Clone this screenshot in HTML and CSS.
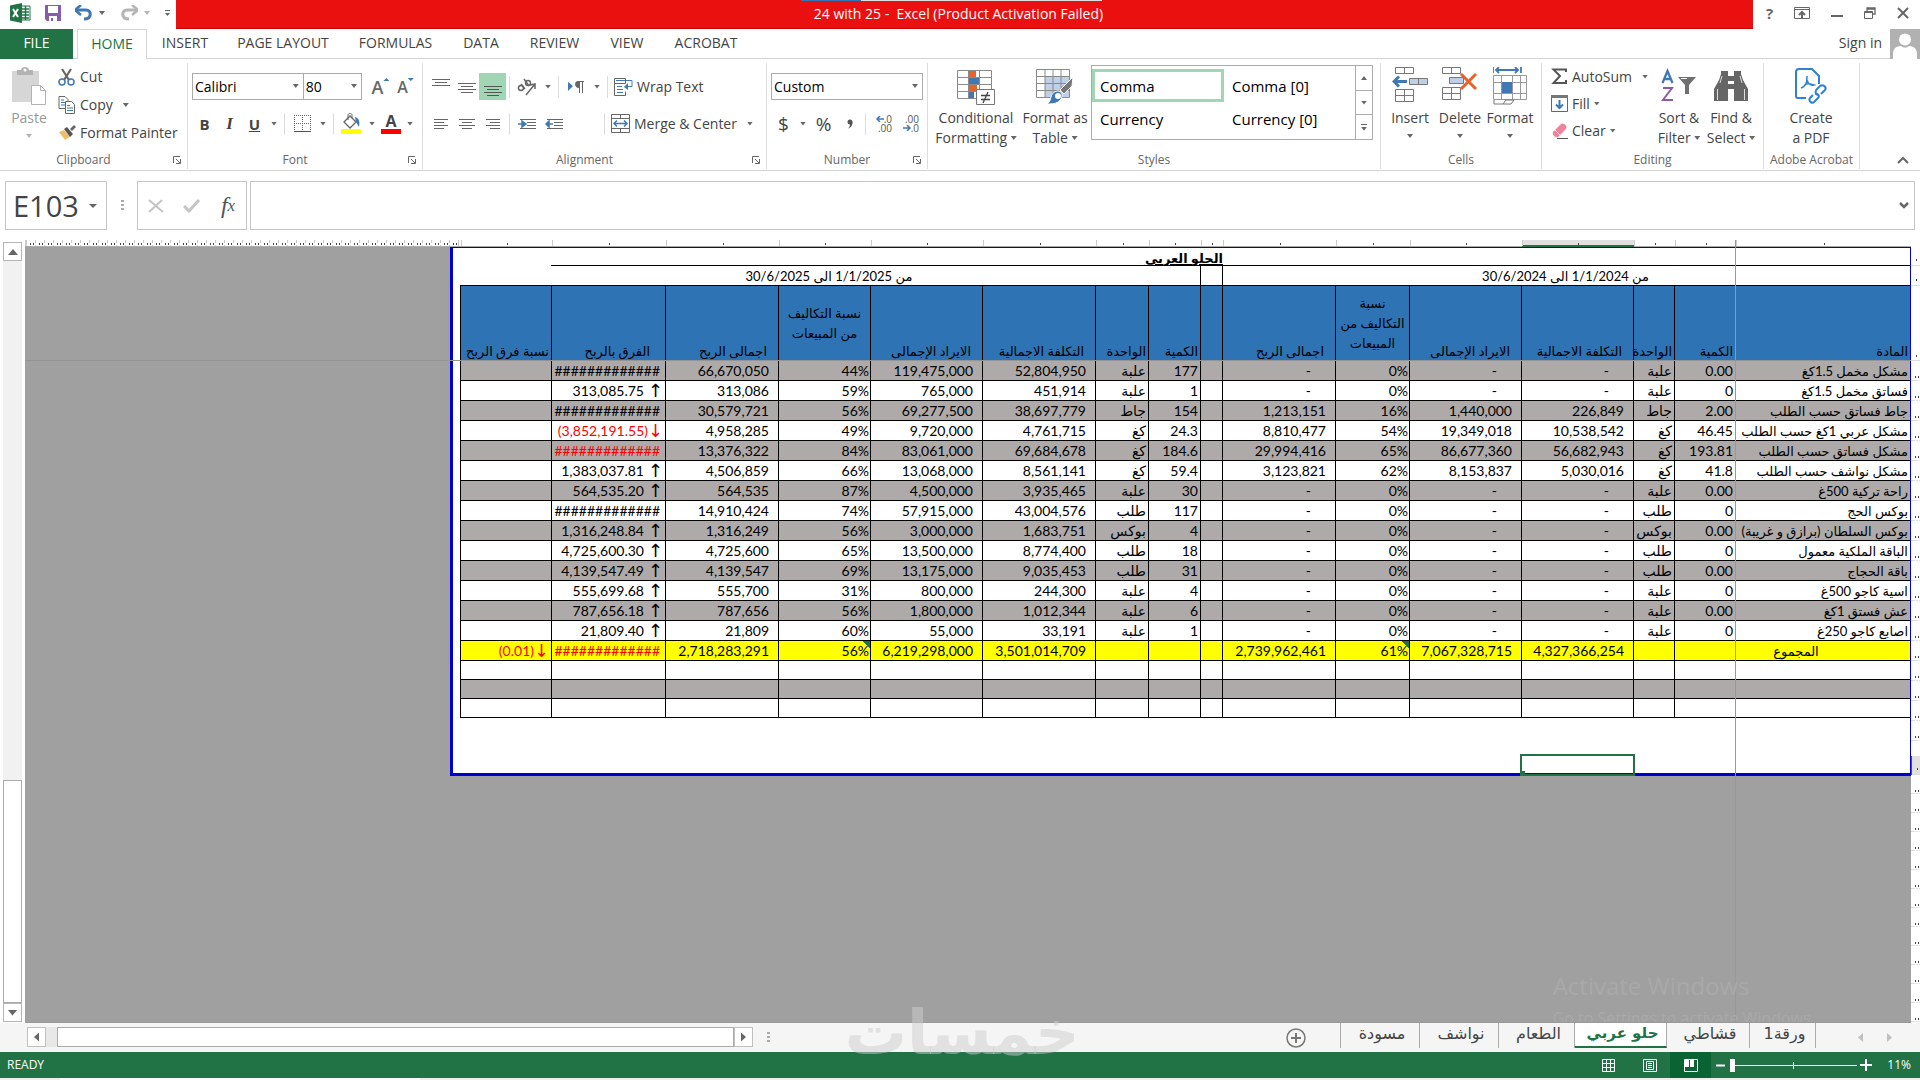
FILE: index.html
```html
<!DOCTYPE html>
<html lang="en">
<head>
<meta charset="utf-8">
<title>24 with 25 - Excel</title>
<link rel="stylesheet" href="styles.css">
</head>
<body>
<header class="titlebar">
  <div class="quick">
    <svg class="q-logo" width="21" height="20" viewBox="0 0 21 20"><path d="M11 3h9v14h-9" fill="#fff" stroke="#217346"/><path d="M12 6h7M12 9h7M12 12h7M12 15h7M15.500 3v14" stroke="#217346" stroke-width="1.500"/><path d="M0 2.500 12 0v20L0 17.500z" fill="#217346"/><path d="m3 6 5 8M8 6l-5 8" stroke="#fff" stroke-width="2"/></svg>
    <button aria-label="Save"><svg width="16" height="16" viewBox="0 0 16 16"><path d="M0 0h16v16H2l-2-2z" fill="#8a5aab"/><path d="M3 1h10v7H3zM4 11h8v5H4z" fill="#fff"/><path d="M6 13h2v3H6z" fill="#8a5aab"/></svg></button>
    <button aria-label="Undo"><svg width="18" height="16" viewBox="0 0 18 16"><path d="M2 5h9c6 0 6 9-2 9" fill="none" stroke="#3f78b4" stroke-width="3"/><path d="M6 0 0 5l6 5" fill="none" stroke="#3f78b4" stroke-width="2.500"/></svg></button>
    <i class="caret"></i>
    <button class="redo" aria-label="Redo"><svg width="18" height="16" viewBox="0 0 18 16"><path d="M16 5H7c-6 0-6 9 2 9" fill="none" stroke="#b5b5b5" stroke-width="3"/><path d="m12 0 6 5-6 5" fill="none" stroke="#b5b5b5" stroke-width="2.500"/></svg></button>
    <i class="caret pale"></i>
    <button class="more" aria-label="Customize toolbar"><svg width="5" height="7" viewBox="0 0 5 7"><path d="M0 .5h5" stroke="#666"/><path d="M0 3h5L2.500 6z" fill="#666"/></svg></button>
  </div>
  <h1 class="title">24 with 25 -&nbsp; Excel (Product Activation Failed)</h1>
  <div class="window">
    <button aria-label="Help" class="help">?</button>
    <button aria-label="Ribbon options"><svg width="16" height="12" viewBox="0 0 16 12"><path d="M.5.5h15v11H.5zM1 2.500h14" fill="none" stroke="#666"/><path d="M8 11V5M5 8l3-3 3 3" fill="none" stroke="#666" stroke-width="2"/></svg></button>
    <button aria-label="Minimize"><svg width="12" height="12" viewBox="0 0 12 12"><path d="M0 9h12" stroke="#666" stroke-width="2"/></svg></button>
    <button aria-label="Restore"><svg width="12" height="12" viewBox="0 0 12 12"><path d="M3 4V1h8v6H8M3 2h8" fill="none" stroke="#666" stroke-width="1.300"/><path d="M.5 4.500h8v7h-8zM1 5.500h7" fill="none" stroke="#666"/></svg></button>
    <button aria-label="Close"><svg width="12" height="12" viewBox="0 0 12 12"><path d="m1 1 10 10M11 1 1 11" stroke="#666" stroke-width="2"/></svg></button>
  </div>
</header>

<nav class="tabs">
  <button class="file">FILE</button>
  <button class="tab home">HOME</button>
  <button class="tab w76">INSERT</button>
  <button class="tab w120">PAGE LAYOUT</button>
  <button class="tab w105">FORMULAS</button>
  <button class="tab w66">DATA</button>
  <button class="tab w81">REVIEW</button>
  <button class="tab w64">VIEW</button>
  <button class="tab w94">ACROBAT</button>
  <a class="signin" href="#">Sign in</a>
  <svg class="avatar" width="30" height="30" viewBox="0 0 30 30"><path d="M0 0h30v30H0z" fill="#b1b1b1"/><circle cx="15" cy="10.500" r="6" fill="#fff"/><path d="M3 30v-5c0-6 4-8 8-8 3 2 5 2 8 0 4 0 8 2 8 8v5z" fill="#fff"/></svg>
</nav>

<section class="ribbon">
  <div class="group g-clip">
    <div class="body">
      <button class="big paste"><svg width="36" height="38" viewBox="0 0 36 38"><path d="M1 4h27v31H1z" fill="#d6d6d6"/><path d="M6 8V3h4c0-4 8-4 8 0h4v5z" fill="#b3b3b3"/><circle cx="14" cy="3" r="1.500" fill="#fff"/><path d="M20.500 18.500h9l5 5v14h-14z" fill="#fff" stroke="#b3b3b3"/><path d="M29.500 18.500v5h5" fill="none" stroke="#b3b3b3"/></svg><span>Paste</span><i class="caret pale"></i></button>
      <div class="list">
        <button><svg width="18" height="18" viewBox="0 0 18 18"><path d="m4 1 7 11M13 1 6 12" stroke="#666" stroke-width="2.200"/><circle cx="4" cy="14" r="3" fill="none" stroke="#3f78b4" stroke-width="1.500"/><circle cx="13" cy="14" r="3" fill="none" stroke="#3f78b4" stroke-width="1.500"/></svg>Cut</button>
        <button><svg width="18" height="18" viewBox="0 0 18 18"><path d="M1 .5h6l3 3v9H1z" fill="#fff" stroke="#666"/><path d="M3 4h3M3 6.500h5M3 9h5" stroke="#3f78b4"/><path d="M7.500 5.500h6l3 3v9h-9z" fill="#fff" stroke="#666"/><path d="M9 9.500h3M9 12h6M9 14.500h6" stroke="#3f78b4"/></svg>Copy<i class="caret gap-l"></i></button>
        <button><svg width="18" height="18" viewBox="0 0 18 18"><path d="m6 6 6 7-5 3-6-8z" fill="#f2bd6b"/><path d="m6 5 3-2 6 7-3 3z" fill="#555"/><path d="m12 5 4-4 2 2-4 4z" fill="#666"/></svg>Format Painter</button>
      </div>
    </div>
    <div class="label">Clipboard<svg class="launch" width="8" height="8" viewBox="0 0 8 8"><path d="M.5 7V.5H7M3 3l4 4M7.500 3v4.500H3" fill="none" stroke="#666"/></svg></div>
  </div>

  <div class="group g-font">
    <div class="body rows">
      <div class="row">
        <label class="drop w115"><select aria-label="Font"><option>Calibri</option></select><i class="caret"></i></label><label class="drop w60"><select aria-label="Font size"><option>80</option></select><i class="caret"></i></label>
        <button class="icon w25 glyph">A<sup class="up"></sup></button><button class="icon w25 glyph small">A<sup class="down"></sup></button>
      </div>
      <div class="row">
        <button class="icon w25 bold">B</button><button class="icon w25 bold ital">I</button><button class="icon w25 bold under">U</button><button class="icon w14" aria-label="Underline style"><i class="caret"></i></button><i class="bar"></i>
        <button class="icon w28" aria-label="Borders"><svg width="17" height="17" viewBox="0 0 17 17"><path d="M0 .5h17M.5 0v17M8.500 0v17M16.500 0v17M0 8.500h17" stroke="#666" stroke-dasharray="1 1" fill="none"/><path d="M0 16.500h17" stroke="#555"/></svg></button><button class="icon w14" aria-label="Border style"><i class="caret"></i></button><i class="bar"></i>
        <button class="icon w28" aria-label="Fill color"><svg width="20" height="21" viewBox="0 0 20 21"><path d="m3 9 6-6 6 6-6 6z" fill="#fff" stroke="#666" stroke-width="1.300"/><path d="M7 7V2c0-2 4-2 4 0v3" fill="none" stroke="#666"/><path d="M14 4c4 1 5 4 4 10l-3-5z" fill="#3f78b4"/><path d="M0 16h20v5H0z" fill="#ff0"/></svg></button><button class="icon w14" aria-label="Fill colors"><i class="caret"></i></button>
        <button class="icon w25 fontcolor">A</button><button class="icon w14" aria-label="Font colors"><i class="caret"></i></button>
      </div>
    </div>
    <div class="label">Font<svg class="launch" width="8" height="8" viewBox="0 0 8 8"><path d="M.5 7V.5H7M3 3l4 4M7.500 3v4.500H3" fill="none" stroke="#666"/></svg></div>
  </div>

  <div class="group g-align">
    <div class="body rows">
      <div class="row">
        <button class="icon w27" aria-label="Top align"><svg width="18" height="18" viewBox="0 0 18 18"><path d="M0 1.500h18M3 4.500h12M0 7.500h18" stroke="#666"/></svg></button><button class="icon w25" aria-label="Middle align"><svg width="18" height="18" viewBox="0 0 18 18"><path d="M0 5.500h18M3 8.500h12M0 11.500h18M3 14.500h12" stroke="#666"/></svg></button><button class="icon w27 on" aria-label="Bottom align"><svg width="18" height="18" viewBox="0 0 18 18"><path d="M0 8.500h18M3 11.500h12M0 14.500h18M3 17.500h12" stroke="#555"/></svg></button><i class="bar"></i>
        <button class="icon w28" aria-label="Orientation"><svg width="20" height="18" viewBox="0 0 20 18"><circle cx="4" cy="10" r="2.500" fill="none" stroke="#666" stroke-width="1.500"/><path d="m4 6 4 5M7 1l5 7" stroke="#666" stroke-width="1.500"/><circle cx="11" cy="5" r="2.500" fill="none" stroke="#666" stroke-width="1.500"/><path d="M9 17 18 6M13 7l5-1v5" fill="none" stroke="#666" stroke-width="1.500"/></svg></button><button class="icon w14" aria-label="Orientations"><i class="caret"></i></button><i class="bar"></i>
        <button class="icon w28" aria-label="Text direction"><svg width="16" height="12" viewBox="0 0 16 12"><path d="m0 1 5 4-5 5z" fill="#3f78b4"/><path d="M10 0h6v1h-1v11h-1V1h-2v11h-1V7C6 7 6 0 10 0z" fill="#666"/></svg></button><button class="icon w14" aria-label="Directions"><i class="caret"></i></button><i class="bar"></i>
        <button class="wide"><svg width="19" height="18" viewBox="0 0 19 18"><path d="M.5.500h11v5H.5zM.5 5.500v12h11v-4" fill="none" stroke="#666"/><path d="M2 2.500h16v6h-6M3 8.500h5M3 11.500h6M3 14.500h6" fill="none" stroke="#3f78b4"/><path d="m14 5-4 4 4 3z" fill="#3f78b4"/></svg>Wrap Text</button>
      </div>
      <div class="row">
        <button class="icon w27" aria-label="Align left"><svg width="14" height="12" viewBox="0 0 14 12"><path d="M0 1.500h14M0 4.500h10M0 7.500h14M0 10.500h10" stroke="#666"/></svg></button><button class="icon w25" aria-label="Center"><svg width="16" height="12" viewBox="0 0 16 12"><path d="M0 1.500h16M3 4.500h10M0 7.500h16M3 10.500h10" stroke="#666"/></svg></button><button class="icon w27" aria-label="Align right"><svg width="14" height="12" viewBox="0 0 14 12"><path d="M0 1.500h14M4 4.500h10M0 7.500h14M4 10.500h10" stroke="#666"/></svg></button><i class="bar"></i>
        <button class="icon w27" aria-label="Decrease indent"><svg width="18" height="12" viewBox="0 0 18 12"><path d="M2 1.500h16M9 4.500h9M9 7.500h9M2 10.500h16" stroke="#666"/><path d="M0 6h5M4 3l4 3-4 3z" stroke="#3f78b4" stroke-width="1.500" fill="#3f78b4"/></svg></button><button class="icon w27" aria-label="Increase indent"><svg width="18" height="12" viewBox="0 0 18 12"><path d="M2 1.500h16M9 4.500h9M9 7.500h9M2 10.500h16" stroke="#666"/><path d="M3 6h5M4 3 1 6l3 3z" stroke="#3f78b4" stroke-width="1.500" fill="#3f78b4"/></svg></button><i class="bar far"></i>
        <button class="wide"><svg width="19" height="19" viewBox="0 0 19 19"><path d="M.5.5h18v18H.5zM0 4.500h19M0 14.500h19M9.500 0v4M9.500 15v4" fill="none" stroke="#666"/><path d="M3 9.500h13M6 6.500l-3 3 3 3M13 6.500l3 3-3 3" fill="none" stroke="#3f78b4" stroke-width="1.500"/></svg>Merge &amp; Center<i class="caret gap-l"></i></button>
      </div>
    </div>
    <div class="label">Alignment<svg class="launch" width="8" height="8" viewBox="0 0 8 8"><path d="M.5 7V.5H7M3 3l4 4M7.500 3v4.500H3" fill="none" stroke="#666"/></svg></div>
  </div>

  <div class="group g-num">
    <div class="body rows">
      <div class="row"><label class="drop full"><select aria-label="Number format"><option>Custom</option></select><i class="caret"></i></label></div>
      <div class="row">
        <button class="icon w25 sign">$</button><button class="icon w14" aria-label="Currencies"><i class="caret"></i></button><button class="icon w27 sign">%</button><button class="icon w25" aria-label="Comma style"><svg width="6" height="10" viewBox="0 0 6 10"><circle cx="3" cy="3" r="2.500" fill="#555"/><path d="M5.500 3c0 4-2 6-4.500 6.500 2-2 2-3 2-5z" fill="#555"/></svg></button><i class="bar"></i>
        <button class="icon w27 dec"><span><svg width="8" height="6" viewBox="0 0 8 6"><path d="M1 3h7M4 0 1 3l3 3" fill="none" stroke="#3f78b4" stroke-width="1.500"/></svg>.0</span><span>.00</span></button><button class="icon w27 dec"><span>.00</span><span><svg width="8" height="6" viewBox="0 0 8 6"><path d="M0 3h7M4 0l3 3-3 3" fill="none" stroke="#3f78b4" stroke-width="1.500"/></svg>.0</span></button>
      </div>
    </div>
    <div class="label">Number<svg class="launch" width="8" height="8" viewBox="0 0 8 8"><path d="M.5 7V.5H7M3 3l4 4M7.500 3v4.500H3" fill="none" stroke="#666"/></svg></div>
  </div>

  <div class="group g-styles">
    <div class="body">
      <button class="big w86"><svg width="38" height="38" viewBox="0 0 38 38"><path d="M11 4h8v7h-8z" fill="#e8622c"/><path d="M11 11h12v7H11z" fill="#3f78b4"/><path d="M11 18h9v7h-9z" fill="#e8622c"/><path d="M11 25h6v6h-6z" fill="#3f78b4"/><path d="M.5 3.500h34v28H.5zM.5 10.500h34M.5 17.500h34M.5 24.500h34M11.500 3v28M22.500 3v28" fill="none" stroke="#8a8a8a"/><path d="M19.500 22.500h18v15h-18z" fill="#fff" stroke="#777"/><path d="M24 28.500h9M24 32.500h9M31 25l-5 11" stroke="#444" stroke-width="1.300"/></svg><span>Conditional</span><span>Formatting <i class="caret"></i></span></button>
      <button class="big w72"><svg width="38" height="38" viewBox="0 0 38 38"><path d="M9 10h24v21H9z" fill="#bdd0e8"/><path d="M.5 2.500h33v28H.5zM.5 9.500h33M.5 16.500h33M.5 23.500h33M9 2.500v28M17 2.500v28M25 2.500v28" fill="none" stroke="#8a8a8a"/><path d="m37 10-1 9-8 8-4-4z" fill="#777" stroke="#fff"/><path d="M22 24c5 0 6 7 0 11-3 2-8 2-11 2 3-2 3-4 4-7 1-4 4-6 7-6z" fill="#3f78b4" stroke="#fff"/><circle cx="22" cy="29" r="3" fill="#fff"/></svg><span>Format as</span><span>Table <i class="caret"></i></span></button>
      <div class="gallery">
        <button class="sel">Comma</button><button>Comma [0]</button><button>Currency</button><button>Currency [0]</button>
        <div class="spin"><button aria-label="Up"><i class="caret flip"></i></button><button aria-label="Down"><i class="caret"></i></button><button aria-label="More"><i class="dash"></i><i class="caret"></i></button></div>
      </div>
    </div>
    <div class="label">Styles</div>
  </div>

  <div class="group g-cells">
    <div class="body">
      <button class="big w50"><svg width="36" height="38" viewBox="0 0 36 38"><path d="M3.500.5h18v6h-18zM12.500.5v6M3.500 22.500h18v12h-18zM3.500 28.500h18M12.500 22.500v12" fill="none" stroke="#777"/><path d="M17.500 11.500h18v6h-18z" fill="#bdd0e8" stroke="#777"/><path d="M26.500 12v5" stroke="#777"/><path d="M2 14.500h13M7 9.500l-5 5 5 5" fill="none" stroke="#3f78b4" stroke-width="3"/></svg><span>Insert</span><i class="caret"></i></button>
      <button class="big w50"><svg width="36" height="38" viewBox="0 0 36 38"><path d="M.5.5h18v6H.5zM9.500.500v6M.5 20.500h18v12H.5zM.5 26.500h18M9.500 20.500v12" fill="none" stroke="#777"/><path d="M7.500 10.500h14v6h-14z" fill="#bdd0e8" stroke="#777"/><path d="m19 7 15 15M34 7 19 22" stroke="#e8622c" stroke-width="3"/></svg><span>Delete</span><i class="caret"></i></button>
      <button class="big w50"><svg width="34" height="38" viewBox="0 0 34 38"><path d="M0 0v6M28 0v6M3 3h22M6 0 3 3l3 3M22 0l3 3-3 3" fill="none" stroke="#3f78b4" stroke-width="1.800"/><path d="M.5 8.500h33v24H.5zM.5 15.500h33M.5 26.500h33M8.500 8v24M19.500 8v24M27.500 8v24" fill="none" stroke="#999"/><path d="M9 15h10v11H9z" fill="#3f78b4"/><path d="M1 33v4h9l3-4h8l-3 4h-8" fill="none" stroke="#777"/></svg><span>Format</span><i class="caret"></i></button>
    </div>
    <div class="label">Cells</div>
  </div>

  <div class="group g-edit">
    <div class="body">
      <div class="list">
        <button><svg width="17" height="17" viewBox="0 0 17 17"><path d="M15 4V1.500H2.500L9 8l-6.500 7H15V12" fill="none" stroke="#555" stroke-width="2"/></svg>AutoSum<i class="caret gap-l"></i></button>
        <button><svg width="17" height="17" viewBox="0 0 17 17"><path d="M.5.5h16v16H.5z" fill="#fff" stroke="#666"/><path d="M0 0h17v3H0z" fill="#777"/><path d="M8.500 5v8M5 9.500l3.500 3.500L12 9.500" fill="none" stroke="#3f78b4" stroke-width="2"/></svg>Fill<i class="caret"></i></button>
        <button><svg width="17" height="17" viewBox="0 0 17 17"><path d="m2 10 8-8c2-2 7 2 5 5l-8 8c-3 1-6-2-5-5z" fill="#f0839b"/><path d="m4 8 5 5" stroke="#fff"/><path d="M6 16.500h11" stroke="#555"/></svg>Clear<i class="caret"></i></button>
      </div>
      <button class="big w52"><svg width="36" height="34" viewBox="0 0 36 34"><path d="M1.500 14 6.500 2l5 12M3 10h7" fill="none" stroke="#3f78b4" stroke-width="2.300"/><path d="M2 19h9L2 31h10" fill="none" stroke="#8a5aab" stroke-width="2"/><path d="M17 8h18l-7 8v9h-4v-9z" fill="#707070"/><path d="M20 9.500h6" stroke="#fff"/></svg><span>Sort &amp;</span><span>Filter <i class="caret"></i></span></button>
      <button class="big w52"><svg width="34" height="34" viewBox="0 0 34 34"><path d="M7 2h7v5h6V2h7v3l2 6 5 9v12H20V20h-6v12H0V20l5-9 2-6z" fill="#666"/><path d="M14 12h6v3h-6z" fill="#fff"/><path d="M3.500 20v11M30.500 20v11M8 7l-2 7M26 7l2 7" stroke="#ddd" fill="none"/></svg><span>Find &amp;</span><span>Select <i class="caret"></i></span></button>
    </div>
    <div class="label">Editing</div>
  </div>

  <div class="group g-pdf">
    <div class="body">
      <button class="big"><svg width="32" height="36" viewBox="0 0 32 36"><path d="M11 30H3c-1 0-2-1-2-2V4c0-2 1-3 3-3h13l7 7v8" fill="none" stroke="#2f82d0" stroke-width="2"/><path d="M6 20c5-2 6-5 6-12M6 20c3 0 3-3 5-4 3-1 5 0 8 1-4 1-6-2-7-5" fill="none" stroke="#2f82d0" stroke-width="1.500"/><path d="m18 27-3 3c-2 3 2 6 4 4l4-4c2-2 0-5-3-4M23 27c-3-1-3-4-1-6l3-3c3-2 7 1 5 4l-4 4" fill="none" stroke="#2f82d0" stroke-width="2"/></svg><span>Create</span><span>a PDF</span></button>
    </div>
    <div class="label">Adobe Acrobat</div>
  </div>
  <button class="collapse" aria-label="Collapse ribbon"><svg width="12" height="8" viewBox="0 0 12 8"><path d="m1 7 5-5 5 5" fill="none" stroke="#666" stroke-width="2"/></svg></button>
</section>

<section class="formula">
  <label class="name"><input aria-label="Name box" value="E103"><i class="caret"></i></label>
  <i class="dots"></i>
  <div class="fx">
    <button aria-label="Cancel"><svg width="16" height="14" viewBox="0 0 16 14"><path d="m1 1 14 12M14 1 1 13" stroke="#c4c4c4" stroke-width="2"/></svg></button>
    <button aria-label="Enter"><svg width="18" height="14" viewBox="0 0 18 14"><path d="m1 7 5 5L16 1" fill="none" stroke="#c4c4c4" stroke-width="3"/></svg></button>
    <button class="fn" aria-label="Insert function">f<sub>x</sub></button>
  </div>
  <label class="entry"><input aria-label="Formula bar"><svg width="10" height="7" viewBox="0 0 10 7"><path d="m1 1 4 4 4-4" fill="none" stroke="#666" stroke-width="2.500"/></svg></label>
</section>

<main class="work">
  <div class="vscroll"><button aria-label="Scroll up"><i class="caret large flip"></i></button><div class="track"></div><div class="thumb"></div><button aria-label="Scroll down"><i class="caret large"></i></button></div>
  <div class="canvas">
    <div class="cols" dir="rtl"><i class="c-item"></i><i class="c-qty"></i><i class="c-unit"></i><i class="c-num picked"></i><i class="c-num"></i><i class="c-pct"></i><i class="c-profit"></i><i class="c-gap"></i><i class="c-qty2"></i><i class="c-unit2"></i><i class="c-profit"></i><i class="c-num"></i><i class="c-pct2"></i><i class="c-profit"></i><i class="c-diff"></i><i class="c-last"></i><i class="c-rest"></i></div>
    <div class="page">
      <table dir="rtl" lang="ar">
        <colgroup><col class="c-item"><col class="c-qty"><col class="c-unit"><col class="c-num"><col class="c-num"><col class="c-pct"><col class="c-profit"><col class="c-gap"><col class="c-qty2"><col class="c-unit2"><col class="c-profit"><col class="c-num"><col class="c-pct2"><col class="c-profit"><col class="c-diff"><col class="c-last"></colgroup>
        <thead>
          <tr class="caption"><th colspan="16">الحلو العربي</th></tr>
          <tr class="period"><th colspan="7">من 1/1/2024 الى 30/6/2024</th><th></th><th colspan="8">من 1/1/2025 الى 30/6/2025</th></tr>
          <tr class="heads"><th>المادة</th><th>الكمية</th><th>الواحدة</th><th>التكلفة الاجمالية</th><th>الايراد الإجمالى</th><th class="mid">نسبة<br>التكاليف من<br>المبيعات</th><th>اجمالى الربح</th><th></th><th>الكمية</th><th>الواحدة</th><th>التكلفة الاجمالية</th><th>الايراد الإجمالى</th><th class="mid">نسبة التكاليف<br>من المبيعات</th><th>اجمالى الربح</th><th>الفرق بالربح</th><th>نسبة فرق الربح</th></tr>
        </thead>
        <tbody>
          <tr><td>مشكل مخمل 1.5كغ</td><td>0.00</td><td>علبة</td><td class="nil">-</td><td class="nil">-</td><td>0%</td><td class="nil">-</td><td></td><td>177</td><td>علبة</td><td>52,804,950</td><td>119,475,000</td><td>44%</td><td>66,670,050</td><td class="hash">#############</td><td></td></tr>
          <tr><td>فساتق مخمل 1.5كغ</td><td>0</td><td>علبة</td><td class="nil">-</td><td class="nil">-</td><td>0%</td><td class="nil">-</td><td></td><td>1</td><td>علبة</td><td>451,914</td><td>765,000</td><td>59%</td><td>313,086</td><td><bdi>313,085.75<b>↑</b></bdi></td><td></td></tr>
          <tr><td>جاط فساتق حسب الطلب</td><td>2.00</td><td>جاط</td><td>226,849</td><td>1,440,000</td><td>16%</td><td>1,213,151</td><td></td><td>154</td><td>جاط</td><td>38,697,779</td><td>69,277,500</td><td>56%</td><td>30,579,721</td><td class="hash">#############</td><td></td></tr>
          <tr><td>مشكل عربي 1كغ حسب الطلب</td><td>46.45</td><td>كغ</td><td>10,538,542</td><td>19,349,018</td><td>54%</td><td>8,810,477</td><td></td><td>24.3</td><td>كغ</td><td>4,761,715</td><td>9,720,000</td><td>49%</td><td>4,958,285</td><td class="neg"><bdi>(3,852,191.55)<b>↓</b></bdi></td><td></td></tr>
          <tr><td>مشكل فساتق حسب الطلب</td><td>193.81</td><td>كغ</td><td>56,682,943</td><td>86,677,360</td><td>65%</td><td>29,994,416</td><td></td><td>184.6</td><td>كغ</td><td>69,684,678</td><td>83,061,000</td><td>84%</td><td>13,376,322</td><td class="hash neg">#############</td><td></td></tr>
          <tr><td>مشكل نواشف حسب الطلب</td><td>41.8</td><td>كغ</td><td>5,030,016</td><td>8,153,837</td><td>62%</td><td>3,123,821</td><td></td><td>59.4</td><td>كغ</td><td>8,561,141</td><td>13,068,000</td><td>66%</td><td>4,506,859</td><td><bdi>1,383,037.81<b>↑</b></bdi></td><td></td></tr>
          <tr><td>راحة تركية 500غ</td><td>0.00</td><td>علبة</td><td class="nil">-</td><td class="nil">-</td><td>0%</td><td class="nil">-</td><td></td><td>30</td><td>علبة</td><td>3,935,465</td><td>4,500,000</td><td>87%</td><td>564,535</td><td><bdi>564,535.20<b>↑</b></bdi></td><td></td></tr>
          <tr><td>بوكس الحج</td><td>0</td><td>طلب</td><td class="nil">-</td><td class="nil">-</td><td>0%</td><td class="nil">-</td><td></td><td>117</td><td>طلب</td><td>43,004,576</td><td>57,915,000</td><td>74%</td><td>14,910,424</td><td class="hash">#############</td><td></td></tr>
          <tr><td>بوكس السلطان (برازق و غريبة)</td><td>0.00</td><td>بوكس</td><td class="nil">-</td><td class="nil">-</td><td>0%</td><td class="nil">-</td><td></td><td>4</td><td>بوكس</td><td>1,683,751</td><td>3,000,000</td><td>56%</td><td>1,316,249</td><td><bdi>1,316,248.84<b>↑</b></bdi></td><td></td></tr>
          <tr><td>الباقة الملكية معمول</td><td>0</td><td>طلب</td><td class="nil">-</td><td class="nil">-</td><td>0%</td><td class="nil">-</td><td></td><td>18</td><td>طلب</td><td>8,774,400</td><td>13,500,000</td><td>65%</td><td>4,725,600</td><td><bdi>4,725,600.30<b>↑</b></bdi></td><td></td></tr>
          <tr><td>باقة الحجاج</td><td>0.00</td><td>طلب</td><td class="nil">-</td><td class="nil">-</td><td>0%</td><td class="nil">-</td><td></td><td>31</td><td>طلب</td><td>9,035,453</td><td>13,175,000</td><td>69%</td><td>4,139,547</td><td><bdi>4,139,547.49<b>↑</b></bdi></td><td></td></tr>
          <tr><td>اسية كاجو 500غ</td><td>0</td><td>علبة</td><td class="nil">-</td><td class="nil">-</td><td>0%</td><td class="nil">-</td><td></td><td>4</td><td>علبة</td><td>244,300</td><td>800,000</td><td>31%</td><td>555,700</td><td><bdi>555,699.68<b>↑</b></bdi></td><td></td></tr>
          <tr><td>عش فستق 1كغ</td><td>0.00</td><td>علبة</td><td class="nil">-</td><td class="nil">-</td><td>0%</td><td class="nil">-</td><td></td><td>6</td><td>علبة</td><td>1,012,344</td><td>1,800,000</td><td>56%</td><td>787,656</td><td><bdi>787,656.18<b>↑</b></bdi></td><td></td></tr>
          <tr><td>اصابع كاجو 250غ</td><td>0</td><td>علبة</td><td class="nil">-</td><td class="nil">-</td><td>0%</td><td class="nil">-</td><td></td><td>1</td><td>علبة</td><td>33,191</td><td>55,000</td><td>60%</td><td>21,809</td><td><bdi>21,809.40<b>↑</b></bdi></td><td></td></tr>
        </tbody>
        <tfoot>
          <tr class="total"><td>المجموع</td><td></td><td></td><td>4,327,366,254</td><td>7,067,328,715</td><td class="flag">61%</td><td>2,739,962,461</td><td></td><td></td><td></td><td>3,501,014,709</td><td>6,219,298,000</td><td class="flag">56%</td><td>2,718,283,291</td><td class="hash neg">#############</td><td class="neg"><bdi>(0.01)<b>↓</b></bdi></td></tr>
          <tr class="blank"><td></td><td></td><td></td><td></td><td></td><td></td><td></td><td></td><td></td><td></td><td></td><td></td><td></td><td></td><td></td><td></td></tr>
          <tr class="blank grey"><td></td><td></td><td></td><td></td><td></td><td></td><td></td><td></td><td></td><td></td><td></td><td></td><td></td><td></td><td></td><td></td></tr>
          <tr class="blank"><td></td><td></td><td></td><td></td><td></td><td></td><td></td><td></td><td></td><td></td><td></td><td></td><td></td><td></td><td></td><td></td></tr>
        </tfoot>
      </table>
      <i class="cursor"></i>
    </div>
    <i class="freeze-v"></i>
    <i class="freeze-h"></i>
    <div class="activate"><p class="big-note">Activate Windows</p><p>Go to Settings to activate Windows.</p></div>
  </div>
  <div class="rowheads"><i class="rh-a"></i><i class="rh-b"></i><i class="rh-c"></i><i class="rh-d"></i><i class="rh-pick"></i><i class="rh-d rh-rest"></i></div>
</main>

<div class="sheets">
  <div class="hscroll"><button aria-label="Scroll left"><i class="arrow-l"></i></button><div class="htrack"></div><div class="hthumb"></div><button aria-label="Scroll right"><i class="arrow-r"></i></button></div>
  <i class="dots"></i>
  <div class="mark" lang="ar" dir="rtl">خمسات</div>
  <button class="add" aria-label="New sheet"><svg width="20" height="20" viewBox="0 0 20 20"><circle cx="10" cy="10" r="9" fill="none" stroke="#777" stroke-width="1.500"/><path d="M10 5v10M5 10h10" stroke="#777" stroke-width="2"/></svg></button>
  <div class="sheetlist" lang="ar">
    <button class="w79">مسودة</button><button class="w79">نواشف</button><button class="w76">الطعام</button><button class="w92 current">حلو عربي</button><button class="w83">قشاطي</button><button class="w66">ورقة1</button>
  </div>
  <div class="navs"><i class="arrow-l"></i><i class="arrow-r"></i></div>
</div>

<footer class="status">
  <span class="ready">READY</span>
  <button class="view" aria-label="Normal"><svg width="13" height="13" viewBox="0 0 13 13"><path d="M.5.5h12v12H.5zM.5 4.500h12M.5 8.500h12M4.500 0v13M8.500 0v13" fill="none" stroke="#fff"/></svg></button>
  <button class="view" aria-label="Page layout"><svg width="14" height="13" viewBox="0 0 14 13"><path d="M.5.5h13v12H.5zM3.500 2.500h7v8h-7zM5 4.500h4M5 6.500h4M5 8.500h4" fill="none" stroke="#fff"/></svg></button>
  <button class="view active" aria-label="Page break preview"><svg width="14" height="13" viewBox="0 0 14 13"><path d="M.5.5h13v12H.5z" fill="none" stroke="#fff"/><path d="M1 1h4v7H1zM6 1h4v7H6z" fill="#fff"/></svg></button>
  <svg class="minus" width="9" height="13" viewBox="0 0 9 13"><path d="M0 6.500h9" stroke="#fff" stroke-width="2"/></svg>
  <input class="zoom" type="range" min="10" max="400" value="11" aria-label="Zoom">
  <svg class="plus" width="12" height="12" viewBox="0 0 12 12"><path d="M6 0v12M0 6h12" stroke="#fff" stroke-width="2"/></svg>
  <span class="percent">11%</span>
</footer>
<div class="edge"></div>
</body>
</html>
```
FILE: styles.css
```css
* { box-sizing: border-box; }
body { margin: 0; min-height: 100vh; display: flex; flex-direction: column; background: #fff; color: #444; font: 14px/20px "Open Sans", "Noto Sans", "DejaVu Sans", sans-serif; overflow: hidden; }
button { margin: 0; padding: 0; border: 0; background: none; color: inherit; font: inherit; white-space: nowrap; }
input, select { font: inherit; color: inherit; border: 0; padding: 0; margin: 0; background: none; outline: 0; min-width: 0; }
svg { display: block; flex: none; }
i { font-style: normal; }
.caret { display: inline-block; flex: none; width: 6px; height: 4px; background: #666; clip-path: polygon(0 0, 100% 0, 50% 100%); }
.caret.pale { background: #b5b5b5; }
.caret.flip { transform: rotate(180deg); }
.caret.large { width: 10px; height: 6px; }

/* title bar */
.titlebar { display: flex; height: 29px; }
.quick { width: 176px; flex: none; display: flex; align-items: center; padding: 0 4px 3px 10px; }
.quick button { margin-left: 14px; }
.quick .caret { margin-left: 6px; }
.quick .redo { margin-left: 15px; }
.quick .more { margin-left: 15px; }
.title { flex: 1; margin: 0; background: linear-gradient(90deg, #2f74b5 60px, #ddd 60px) 49% 0 / 301px 1px no-repeat #ea1010; border-bottom: 1px solid #c00; color: #fff; font-size: 14px; font-weight: 400; line-height: 28px; text-align: center; padding-right: 12px; }
.window { width: 167px; flex: none; display: flex; align-items: center; justify-content: space-between; padding: 0 11px 3px 13px; color: #666; }
.help { font-weight: 700; font-size: 15px; }

/* ribbon tabs */
.tabs { display: flex; height: 30px; line-height: 28px; box-shadow: inset 0 -1px #d4d4d4; }
.tabs button { flex: none; padding-bottom: 2px; }
.file { width: 73px; margin-right: 4px; background: #217346; color: #fff; }
.home { width: 70px; color: #217346; background: #fff; border: 1px solid #d4d4d4; border-bottom: 0; }
.signin { margin-left: auto; margin-right: 8px; color: #444; text-decoration: none; }
.w14 { width: 14px; } .w25 { width: 25px; } .w27 { width: 27px; } .w28 { width: 28px; }
.w50 { width: 50px; } .w52 { width: 52px; } .w60 { width: 60px; } .w64 { width: 64px; } .w66 { width: 66px; }
.w72 { width: 72px; } .w76 { width: 76px; } .w79 { width: 79px; } .w81 { width: 81px; } .w83 { width: 83px; } .w86 { width: 86px; }
.w92 { width: 92px; } .w94 { width: 94px; } .w105 { width: 105px; } .w115 { width: 115px; } .w120 { width: 120px; }

/* ribbon */
.ribbon { display: flex; height: 112px; border-bottom: 1px solid #d4d4d4; padding: 4px 0 1px; }
.group { flex: none; display: flex; flex-direction: column; border-right: 1px solid #ddd; }
.body { flex: 1; display: flex; }
.label { position: relative; height: 17px; text-align: center; font-size: 12px; line-height: 16px; color: #666; white-space: nowrap; }
.launch { position: absolute; right: 6px; top: 4px; }
.g-clip { width: 188px; } .g-font { width: 235px; } .g-align { width: 344px; } .g-num { width: 161px; }
.g-styles { width: 453px; } .g-cells { width: 161px; } .g-edit { width: 222px; } .g-pdf { width: 96px; }
.g-clip .label, .g-font .label, .g-align .label { padding-right: 20px; }
.big { flex: none; display: flex; flex-direction: column; align-items: center; padding-top: 4px; }
.big svg { height: 38px; }
.big span { line-height: 20px; }
.big span:first-of-type { margin-top: 3px; }
.big > .caret { margin-top: 6px; }
.big span .caret { vertical-align: 3px; }
.paste { width: 58px; color: #999; }
.list { display: flex; flex-direction: column; }
.list button { height: 28px; display: flex; align-items: center; gap: 4px; }
.gap-l { margin-left: 6px; }
.rows { flex-direction: column; padding: 10px 4px 0; }
.row { display: flex; align-items: center; height: 27px; }
.row + .row { margin-top: 10px; }
.icon { flex: none; display: flex; align-items: center; justify-content: center; height: 27px; }
.bar { flex: none; width: 1px; height: 22px; background: #ddd; margin: 0 3px; }
.far { margin-left: 37px; }
.drop { position: relative; display: flex; height: 27px; border: 1px solid #ababab; color: #000; }
.drop + .drop { border-left: 0; }
.drop select { flex: 1; appearance: none; padding-left: 2px; }
.drop .caret, .name .caret { position: absolute; right: 4px; top: 10px; pointer-events: none; }
.full { width: 152px; }
.g-font .drop + .drop { margin-right: 6px; }
.glyph { font-size: 18px; font-weight: 600; color: #666; }
.small { font-size: 16px; }
.glyph sup { width: 6px; height: 3px; margin-bottom: 14px; background: #3f78b4; clip-path: polygon(0 100%, 100% 100%, 50% 0); }
.glyph .down { clip-path: polygon(0 0, 100% 0, 50% 100%); }
.bold { font-weight: 700; font-size: 15px; }
.ital { font-style: italic; font-family: "Liberation Serif", serif; font-size: 17px; }
.under { text-decoration: underline; }
.fontcolor { font-weight: 700; font-size: 16px; height: 20px; width: 20px; margin: 0 2px; line-height: 15px; align-items: flex-start; border-bottom: 5px solid #f00; }
.on { background: #a0d6b4; }
.wide { display: flex; align-items: center; gap: 4px; margin-left: 3px; }
.sign { font-size: 19px; }
.dec { flex-direction: column; align-items: flex-end; font-size: 10px; line-height: 9px; padding-right: 4px; color: #555; }
.dec span { display: flex; align-items: center; }
.g-styles .body { padding-left: 5px; }
.gallery { position: relative; width: 282px; height: 75px; margin: 2px 0 0; padding: 3px 18px 7px 0; border: 1px solid #ababab; display: grid; grid-template-columns: 132px 132px; grid-template-rows: 33px 33px; color: #000; font-size: 15px; }
.gallery > button { text-align: left; border: 3px solid transparent; padding-left: 5px; }
.gallery > .sel { border-color: #a0d6b4; }
.spin { position: absolute; right: 0; top: 0; bottom: 0; width: 17px; display: flex; flex-direction: column; border-left: 1px solid #ababab; }
.spin button { flex: 1; display: flex; flex-direction: column; align-items: center; justify-content: center; gap: 2px; }
.spin button + button { border-top: 1px solid #ababab; }
.dash { width: 6px; height: 1px; background: #666; }
.g-cells .body { padding-left: 4px; }
.g-edit .body { padding-left: 9px; }
.g-edit .list { width: 102px; }
.g-edit .list button { height: 27px; }
.g-pdf .big { width: 94px; }
.collapse { margin: auto 11px 5px auto; }

/* formula bar */
.formula { display: flex; height: 69px; padding: 10px 5px 10px; }
.name { position: relative; display: flex; width: 102px; border: 1px solid #c6c6c6; }
.name input { width: 80px; padding-left: 7px; font: 29px "Open Sans", sans-serif; }
.name .caret { top: 22px; right: 9px; width: 8px; }
.dots { width: 3px; height: 11px; margin: auto 14px; background: repeating-linear-gradient(#aaa 0 2px, transparent 2px 4px); }
.fx { display: flex; width: 110px; margin-right: 3px; border: 1px solid #c6c6c6; }
.formula .dots { margin-right: 13px; }
.fx button { flex: 1; display: flex; align-items: center; justify-content: center; }
.fx .fn { font: italic 24px "Liberation Serif", serif; color: #555; }
.fn sub { font-size: 17px; }
.entry { flex: 1; display: flex; align-items: center; border: 1px solid #c6c6c6; padding-right: 5px; }
.entry input { flex: 1; }

/* worksheet */
.work { flex: 1; display: grid; grid-template-columns: 25px 1fr 9px; min-height: 0; }
.vscroll { display: flex; flex-direction: column; padding: 2px 3px 1px; }
.vscroll button { height: 19px; border: 1px solid #b5b5b5; display: flex; align-items: center; justify-content: center; }
.track { flex: 520; background: #f1f1f1; }
.thumb { flex: 222; border: 1px solid #ababab; }
.canvas { position: relative; display: flex; flex-direction: column; min-width: 0; background: #a0a0a0; overflow: hidden; border-bottom: 1px solid #999; }
.cols { display: flex; flex: none; height: 7px; background: #fff; border-bottom: 1px solid #ababab; }
.cols i { flex: none; border-left: 1px solid #ccc; background: linear-gradient(#444, #444) 50% 3px / 1px 2px no-repeat; }
.cols .picked { background-color: #e0e0e0; box-shadow: 0 1px #217346, inset 0 -1px #217346; }
.cols .c-rest { flex: 1; background: repeating-linear-gradient(90deg, #ccc 0 1px, transparent 1px 9px); position: relative; }
.cols .c-rest::after { content: ""; position: absolute; left: 4px; right: 4px; top: 3px; height: 2px; background: repeating-linear-gradient(90deg, #444 0 1px, #fff 1px 3px, #444 3px 4px, #fff 4px 9px); }
.c-item { width: 175px; } .c-qty { width: 61px; } .c-unit { width: 41px; } .c-num { width: 112px; } .c-pct { width: 74px; } .c-profit { width: 113px; }
.c-gap { width: 22px; } .c-qty2 { width: 52px; } .c-unit2 { width: 53px; } .c-pct2 { width: 92px; } .c-diff { width: 114px; } .c-last { width: 91px; }
.page { position: relative; align-self: flex-end; flex: none; background: #fff; border: 3px solid #0000d0; border-top-width: 1px; border-right-width: 1px; padding: 0 0 55px 7px; }
table { width: 1450px; table-layout: fixed; border-collapse: separate; border-spacing: 0; font: 14px/18px Lato, "DejaVu Sans", sans-serif; color: #000; }
td, th { padding: 1px 2px 0 0; height: 20px; font-weight: 400; white-space: nowrap; text-align: right; vertical-align: middle; border-left: 1px solid #000; border-bottom: 1px solid #000; }
td:first-child { border-left-color: #999; font-size: 13px; }
td:nth-child(6), td:nth-child(13) { padding-right: 1px; }
td:nth-child(4), td:nth-child(5), td:nth-child(7), td:nth-child(11), td:nth-child(12), td:nth-child(14) { padding-right: 9px; }
.heads th:nth-child(4), .heads th:nth-child(5), .heads th:nth-child(7), .heads th:nth-child(11), .heads th:nth-child(12), .heads th:nth-child(14) { padding-right: 11px; }
td:nth-child(n).nil { padding-right: 24px; }
td:nth-child(n).hash { padding-right: 4px; direction: ltr; }
.neg { color: #f00; }
bdi { display: inline-flex; direction: ltr; vertical-align: top; }
td b { width: 19px; text-align: right; font: 18px/18px "DejaVu Sans", sans-serif; }
.neg b { width: 15px; }
.caption th { height: 18px; line-height: 16px; border: 0; font-size: 13px; font-weight: 700; text-align: center; text-decoration: underline; background: linear-gradient(90deg, #fff 91px, #000 91px) 0 100% / 100% 1px no-repeat; }
.period th { text-align: center; font-size: 13px; }
.period th:last-child { border-left: 0; }
.heads th { height: 75px; vertical-align: bottom; background: #2e74b5; font-size: 13px; line-height: 18px; border-bottom-color: #999; }
.heads .mid { vertical-align: middle; text-align: center; padding: 0; line-height: 20px; }
.heads th:nth-child(15) { padding-right: 15px; }
tbody tr:nth-child(odd), .grey { background: #aeaaa9; }
.total { background: #ff0; }
.total td:first-child { text-align: center; padding-right: 54px; }
.flag { background: linear-gradient(225deg, #217346 5px, transparent 5px) no-repeat; }
.blank td { height: 19px; }
.cursor { position: absolute; right: 275px; bottom: -3px; width: 115px; height: 22px; border: 2px solid #217346; }
.cursor::after { content: ""; position: absolute; left: -2px; bottom: -2px; width: 5px; height: 5px; background: #217346; }
.freeze-v { position: absolute; top: 0; bottom: 0; right: 175px; width: 1px; background: #989898; }
.freeze-h { position: absolute; left: 0; right: 0; top: 120px; height: 1px; background: #949494; }
.activate { position: absolute; left: 81%; bottom: -10px; color: #a9a9a9; white-space: nowrap; line-height: 28px; font-size: 16px; }
.activate p { margin: 0; }
.activate .big-note { font-size: 24px; line-height: 36px; }
.rowheads { display: flex; flex-direction: column; padding-top: 7px; overflow: hidden; }
.rowheads i { flex: none; background: linear-gradient(#ddd, #ddd) 0 100% / 100% 1px no-repeat, linear-gradient(#444, #444) 5px 70% / 1px 2px no-repeat; }
.rowheads .rh-a { height: 19px; } .rowheads .rh-b { height: 20px; } .rowheads .rh-c { height: 75px; background-position: 0 100%, 5px 95%; }
.rowheads .rh-d { height: 395px; background: repeating-linear-gradient(transparent 0 19px, #ddd 19px 20px); position: relative; }
.rowheads .rh-d::after { content: ""; position: absolute; left: 4px; top: 14px; bottom: 0; width: 4px; background: repeating-linear-gradient(transparent 0 1px, #444 1px 3px, #fff 3px 20px); clip-path: polygon(0 0, 25% 0, 25% 100%, 75% 100%, 75% 0, 100% 0, 100% 100%, 0 100%); }
.rowheads .rh-pick { height: 19px; background-color: #e0e0e0; border-left: 1px solid #217346; }
.rowheads .rh-rest { flex: 1; height: auto; background: repeating-linear-gradient(transparent 0 18px, #ddd 18px 19px); }
.rowheads .rh-rest::after { background: repeating-linear-gradient(transparent 0 1px, #444 1px 3px, #fff 3px 19px); }

/* sheet tabs */
.sheets { position: relative; display: flex; align-items: flex-start; height: 29px; padding-left: 27px; background: #f5f5f5; }
.hscroll { display: flex; width: 726px; height: 20px; margin-top: 4px; }
.hscroll button { width: 19px; border: 1px solid #c0c0c0; background: #fff; display: flex; align-items: center; justify-content: center; }
.htrack { width: 11px; background: #e8e8e8; }
.hthumb { flex: 1; background: #fff; border: 1px solid #ababab; }
.arrow-l, .arrow-r { width: 5px; height: 9px; background: #666; clip-path: polygon(100% 0, 100% 100%, 0 50%); }
.arrow-r { clip-path: polygon(0 0, 100% 50%, 0 100%); }
.sheets .dots { margin: 9px 14px; }
.mark { position: absolute; left: 44%; top: -20px; font: 700 62px/60px "DejaVu Sans", sans-serif; color: rgba(205, 205, 205, .5); z-index: 2; }
.add { margin: 5px 34px 0 auto; }
.sheetlist { display: flex; border-left: 1px solid #ababab; height: 25px; font: 16px/24px "DejaVu Sans", sans-serif; }
.sheetlist button { border-right: 1px solid #ababab; line-height: 20px; padding: 0 0 4px 4px; }
.sheetlist .current { background: #fff; color: #217346; font-weight: 700; font-size: 15px; border-bottom: 2px solid #217346; }
.navs { display: flex; gap: 24px; width: 104px; padding: 10px 0 0 42px; }
.navs i { background: #c0c0c0; }

/* status bar */
.status { display: flex; align-items: center; height: 26px; background: #217346; color: #fff; font-size: 12px; }
.ready { margin: 0 auto 0 7px; }
.view { width: 41px; height: 26px; display: flex; align-items: center; justify-content: center; }
.active { background: #0a6332; }
.minus { margin-left: 5px; }
.zoom { appearance: none; width: 127px; height: 13px; margin: 0 3px 0 5px; background: linear-gradient(#fff, #fff) 50% 50% / 1px 7px no-repeat, linear-gradient(#fff, #fff) 0 50% / 100% 1px no-repeat; }
.zoom::-webkit-slider-thumb { appearance: none; width: 5px; height: 13px; background: #fff; }
.percent { width: 34px; margin: 0 9px 0 5px; text-align: right; }
.edge { height: 2px; background: linear-gradient(#fff, #fff) 60px 0 / 360px 2px no-repeat #eee; }
```
